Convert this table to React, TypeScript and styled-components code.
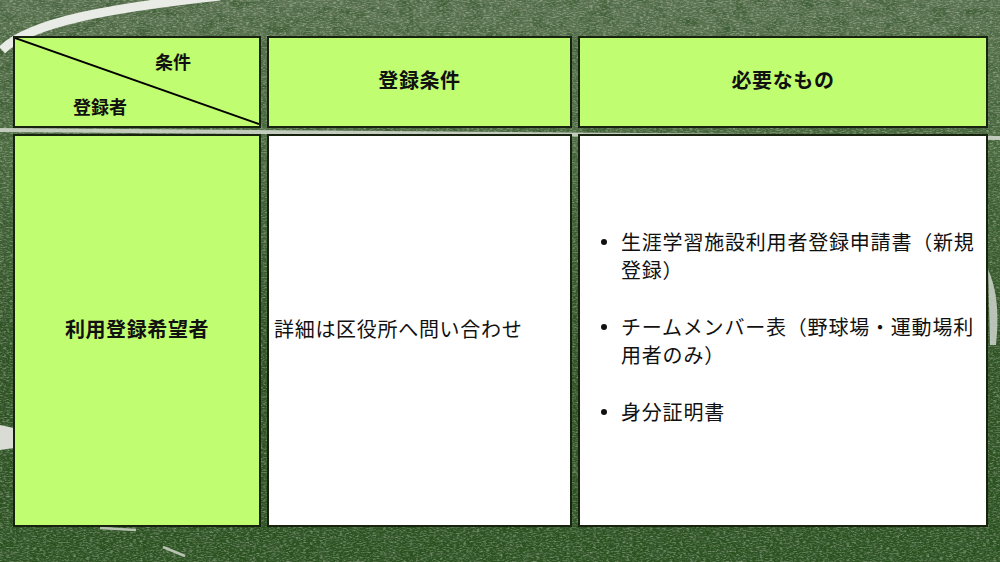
import React from "react";
import styled, { createGlobalStyle } from "styled-components";

const GlobalStyle = createGlobalStyle`
  html, body {
    margin: 0;
    padding: 0;
    background: #2f4a27;
  }
  body {
    font-family: "Noto Sans CJK JP", "Noto Sans", sans-serif;
    color: #111;
  }
`;

const Page = styled.div`
  position: relative;
  width: 1000px;
  height: 562px;
  overflow: hidden;
`;

const Field = styled.svg`
  position: absolute;
  inset: 0;
  width: 1000px;
  height: 562px;
  z-index: 0;
`;

const Table = styled.div`
  position: relative;
  z-index: 1;
  display: grid;
  grid-template-columns: 248px 305px 410px;
  grid-template-rows: 92px 393px;
  column-gap: 6px;
  row-gap: 6px;
  padding: 36px 0 0 13px;
`;

const Cell = styled.div<{ $tone: "green" | "white" }>`
  position: relative;
  box-sizing: border-box;
  border: 2px solid #17230f;
  background: ${(p) => (p.$tone === "green" ? "#c0fd70" : "#ffffff")};
  display: flex;
  align-items: center;
`;

const HeadText = styled.div`
  width: 100%;
  text-align: center;
  font-weight: 700;
  font-size: 20px;
  letter-spacing: 0.6px;
  padding-bottom: 5px;
`;

const CornerLabel = styled.span<{ $top: number; $left: number }>`
  position: absolute;
  top: ${(p) => p.$top}px;
  left: ${(p) => p.$left}px;
  font-weight: 700;
  font-size: 18px;
`;

const Diagonal = styled.svg`
  position: absolute;
  inset: 0;
  width: 100%;
  height: 100%;
`;

const BodyText = styled.div`
  padding-left: 5px;
  padding-bottom: 5px;
  font-size: 20px;
  letter-spacing: 0.7px;
`;

const List = styled.ul`
  list-style: none;
  margin: -8px 0 0 0;
  padding: 0 0 0 41px;
  font-size: 20px;
  line-height: 28px;
  letter-spacing: 0.8px;
  display: flex;
  flex-direction: column;
  gap: 29px;
`;

const Item = styled.li`
  position: relative;
  &::before {
    content: "";
    position: absolute;
    left: -20px;
    top: 11px;
    width: 6px;
    height: 6px;
    border-radius: 50%;
    background: #111;
  }
`;

function FieldBackground() {
  return (
    <Field viewBox="0 0 1000 562" preserveAspectRatio="none">
      <defs>
        <linearGradient id="turf" x1="0" y1="0" x2="0" y2="1">
          <stop offset="0" stopColor="#5b7251" />
          <stop offset="0.25" stopColor="#4b6a40" />
          <stop offset="0.6" stopColor="#2f5224" />
          <stop offset="1" stopColor="#2b5120" />
        </linearGradient>
        <filter id="grass" x="0" y="0" width="100%" height="100%">
          <feTurbulence type="fractalNoise" baseFrequency="0.3 0.8" numOctaves="3" seed="4" />
          <feColorMatrix
            type="matrix"
            values="0 0 0 0 0.78  0 0 0 0 0.87  0 0 0 0 0.72  1.9 0 0 0 -0.82"
          />
        </filter>
        <filter id="shade" x="0" y="0" width="100%" height="100%">
          <feTurbulence type="fractalNoise" baseFrequency="0.06 0.12" numOctaves="3" seed="9" />
          <feColorMatrix
            type="matrix"
            values="0 0 0 0 0.04  0 0 0 0 0.1  0 0 0 0 0.03  0 2 0 0 -0.85"
          />
        </filter>
      </defs>
      <rect width="1000" height="562" fill="url(#turf)" />
      <rect width="1000" height="562" filter="url(#shade)" />
      <rect width="1000" height="562" filter="url(#grass)" opacity="0.5" />
      <path
        d="M2 50 C 30 22, 110 8, 220 -4"
        stroke="#e9ece6"
        strokeWidth="9"
        fill="none"
      />
      <path d="M0 130 L1000 138" stroke="#d6dbd1" strokeWidth="4" fill="none" opacity="0.85" />
      <path d="M0 425 L14 428 L14 448 L0 450 Z" fill="#d8dcd4" />
      <path d="M986 265 C 996 285, 1000 310, 996 345 L 990 345 L 988 265 Z" fill="#cfd4cc" opacity="0.85" />
      <path d="M100 528 L136 530" stroke="#b8c2b2" strokeWidth="2.5" />
      <path d="M163 547 L185 556" stroke="#b8c2b2" strokeWidth="2.5" />
    </Field>
  );
}

export default function App() {
  return (
    <Page>
      <GlobalStyle />
      <FieldBackground />
      <Table>
        <Cell $tone="green">
          <Diagonal viewBox="0 0 244 88" preserveAspectRatio="none">
            <line x1="0" y1="0" x2="244" y2="86" stroke="#000" strokeWidth="2" />
          </Diagonal>
          <CornerLabel $top={10} $left={140}>
            条件
          </CornerLabel>
          <CornerLabel $top={55} $left={58}>
            登録者
          </CornerLabel>
        </Cell>
        <Cell $tone="green">
          <HeadText>登録条件</HeadText>
        </Cell>
        <Cell $tone="green">
          <HeadText>必要なもの</HeadText>
        </Cell>
        <Cell $tone="green">
          <HeadText>利用登録希望者</HeadText>
        </Cell>
        <Cell $tone="white">
          <BodyText>詳細は区役所へ問い合わせ</BodyText>
        </Cell>
        <Cell $tone="white">
          <List>
            <Item>生涯学習施設利用者登録申請書（新規登録）</Item>
            <Item>チームメンバー表（野球場・運動場利用者のみ）</Item>
            <Item>身分証明書</Item>
          </List>
        </Cell>
      </Table>
    </Page>
  );
}
